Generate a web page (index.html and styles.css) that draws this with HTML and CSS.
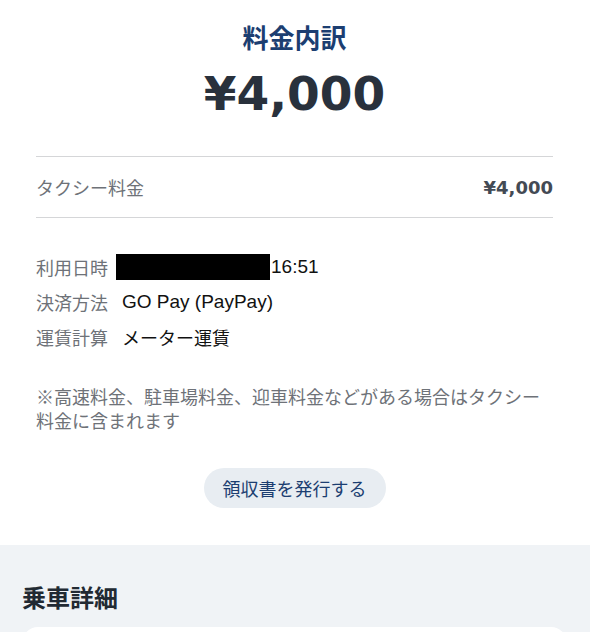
FILE: index.html
```html
<!DOCTYPE html>
<html>
<head>
    <title>料金内訳</title>
    <link rel="stylesheet" href="styles.css">
</head>
<body>
    <div class="summary">
        <h1 class="title">料金内訳</h1>
        <p class="total">¥4,000</p>

        <div class="fare_row">
            <span class="fare_label">タクシー料金</span>
            <span class="fare_price">¥4,000</span>
        </div>

        <div class="details">
            <div class="detail">
                <span class="detail_label">利用日時</span>
                <span class="detail_value"><span class="redacted"></span><span class="latin time">16:51</span></span>
            </div>
            <div class="detail">
                <span class="detail_label">決済方法</span>
                <span class="detail_value latin">GO Pay (PayPay)</span>
            </div>
            <div class="detail">
                <span class="detail_label">運賃計算</span>
                <span class="detail_value">メーター運賃</span>
            </div>
        </div>

        <p class="note">※高速料金、駐車場料金、迎車料金などがある場合はタクシー料金に含まれます</p>

        <div class="actions">
            <button class="receipt_btn">領収書を発行する</button>
        </div>
    </div>

    <div class="ride">
        <h2 class="ride_title">乗車詳細</h2>
        <div class="ride_card"></div>
    </div>
</body>
</html>
```

FILE: styles.css
```css
body {
    margin: 0;
    background: #fff;
    font-family: "Noto Sans CJK JP", sans-serif;
    color: #1a1a1a;
}
.summary {
    padding: 19px 37px 37px 36px;
}
.title {
    margin: 0;
    font-size: 26px;
    line-height: 36px;
    font-weight: bold;
    text-align: center;
    color: #1c3e71;
}
.total {
    margin: 9px 0 32px;
    font-family: "DejaVu Sans", sans-serif;
    font-size: 47px;
    line-height: 60px;
    font-weight: bold;
    text-align: center;
    color: #29313c;
}
.fare_row {
    display: flex;
    justify-content: space-between;
    align-items: center;
    height: 60px;
    border-top: 1px solid #d5d6d8;
    border-bottom: 1px solid #d5d6d8;
}
.fare_label {
    font-size: 18px;
    color: #6e7278;
}
.fare_price {
    font-family: "DejaVu Sans", sans-serif;
    font-size: 18px;
    font-weight: bold;
    color: #434a54;
}
.details {
    margin-top: 31px;
}
.detail {
    display: flex;
    align-items: center;
    height: 35px;
    font-size: 18px;
}
.detail_label {
    width: 72px;
    margin-right: 14px;
    color: #6e7278;
}
.detail_value {
    display: flex;
    align-items: center;
    color: #111;
}
.latin {
    font-family: "Liberation Sans", "Noto Sans CJK JP", sans-serif;
    font-size: 19px;
}
.redacted {
    display: inline-block;
    width: 154px;
    height: 26px;
    margin-left: -6px;
    background: #000;
}
.time {
    margin-left: 1px;
}
.note {
    margin: 30px 0 0;
    font-size: 18px;
    line-height: 24px;
    color: #6e7278;
}
.actions {
    margin-top: 36px;
    text-align: center;
}
.receipt_btn {
    height: 40px;
    padding: 0 19px;
    border: none;
    border-radius: 20px;
    background: #e8edf2;
    font-family: "Noto Sans CJK JP", sans-serif;
    font-size: 18px;
    color: #1c3e71;
}
.ride {
    background: #f0f3f6;
    padding: 36px 22px 0;
    min-height: 200px;
}
.ride_title {
    margin: 0 0 14px;
    font-size: 24px;
    line-height: 32px;
    font-weight: bold;
    color: #222a33;
}
.ride_card {
    background: #fff;
    border-radius: 16px;
    height: 160px;
    margin-right: 1px;
}
```
